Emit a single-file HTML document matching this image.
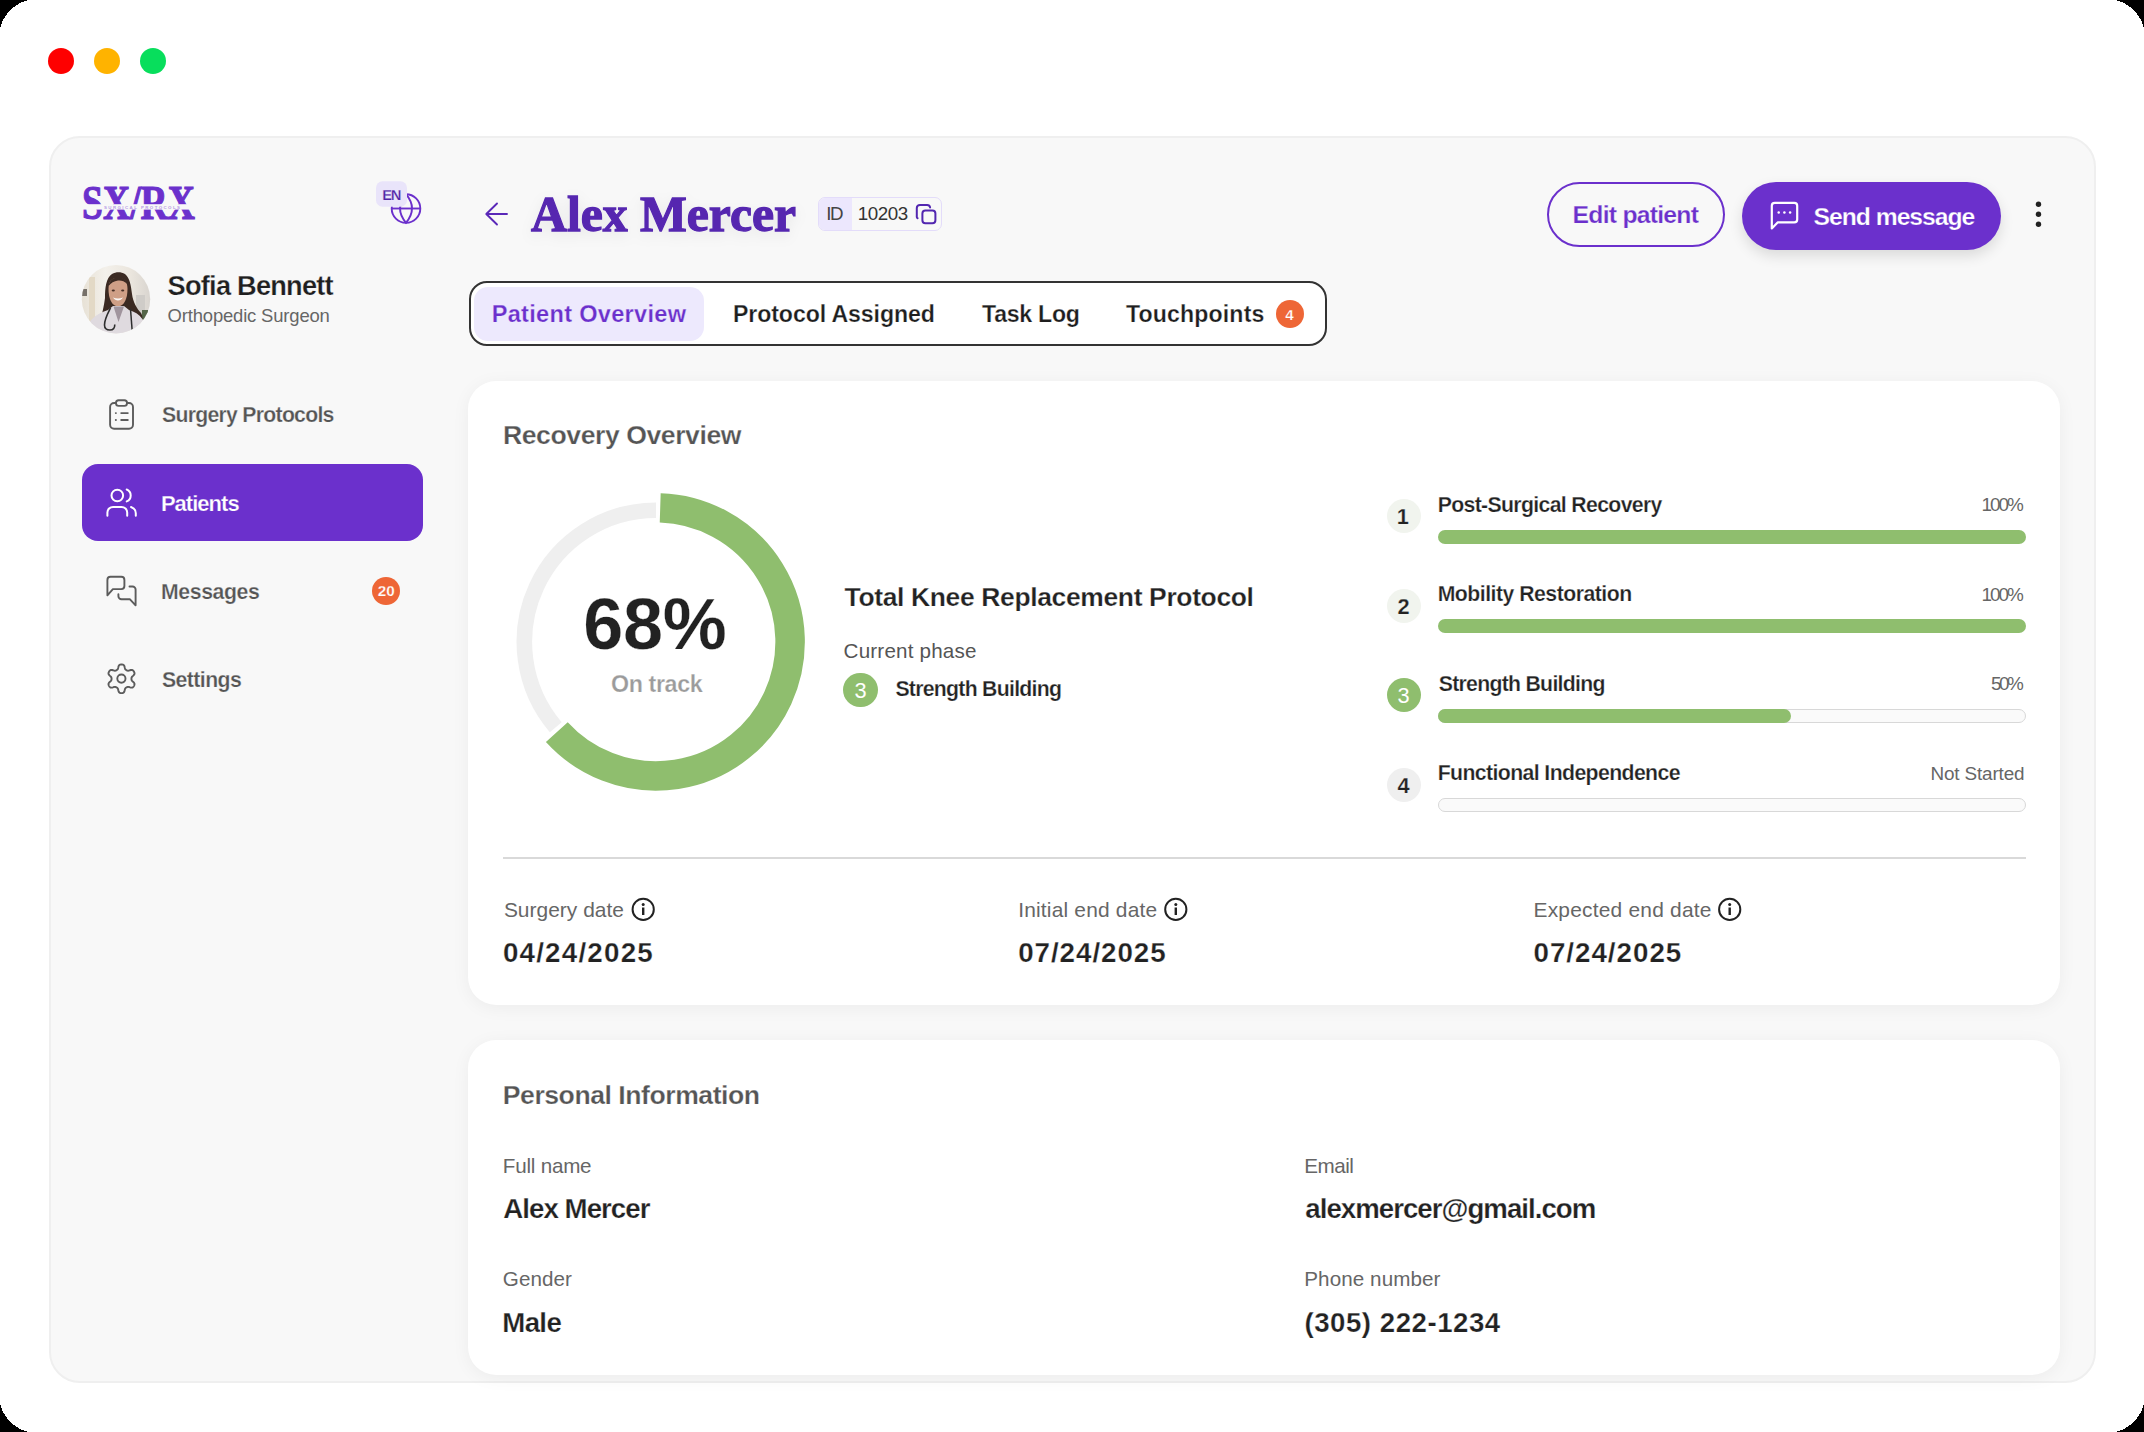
<!DOCTYPE html>
<html><head><meta charset="utf-8">
<style>
*{margin:0;padding:0;box-sizing:border-box}
html,body{width:2144px;height:1432px;overflow:hidden;background:#000}
body{font-family:"Liberation Sans",sans-serif;color:#222;position:relative}
.win{position:absolute;left:0;top:0;width:2144px;height:1432px;background:#fff;overflow:hidden}
.dot{position:absolute;width:26px;height:26px;border-radius:50%;top:48px}
.frame{position:absolute;left:48.5px;top:136.3px;width:2047.3px;height:1247px;background:#f8f8f8;border:2px solid #efefef;border-radius:31px;overflow:hidden}
.card{position:absolute;background:#fff;border-radius:28px;box-shadow:0 3px 18px rgba(0,0,0,0.05)}
.t{position:absolute;white-space:nowrap;line-height:1}
.abs{position:absolute}
.circ{position:absolute;border-radius:50%}
.bar{position:absolute;left:1438px;width:588px;height:14px;border-radius:7px;background:#8fbe6e}
.track{position:absolute;left:1438px;width:588px;height:14px;border-radius:7px;background:#fafafa;border:1.3px solid #d8d8d8}
.num{position:absolute;width:34px;height:34px;border-radius:50%;background:#f1f4ee;left:1386.5px}
svg{position:absolute;overflow:visible}
@media (max-width:1200px){html{zoom:0.5}}
</style></head>
<body>
<div class="win">
  <div class="dot" style="left:48px;background:#fe0000"></div>
  <div class="dot" style="left:94px;background:#ffb300"></div>
  <div class="dot" style="left:140px;background:#08de5c"></div>

  <div class="frame"></div>

  <!-- logo -->
  <svg style="left:0;top:0" width="2144" height="1432" viewBox="0 0 2144 1432">
    <g id="logo">
      <text x="82" y="219.3" font-family="Liberation Serif" font-weight="700" font-size="49.5" fill="#6b30cc" stroke="#6b30cc" stroke-width="1.2" textLength="113" lengthAdjust="spacingAndGlyphs">SX/RX</text>
      <rect x="80" y="204.2" width="120" height="5.4" fill="#f8f8f8"/>
      <text x="104" y="208.6" font-family="Liberation Sans" font-weight="700" font-size="4.4" fill="#b79be6" textLength="76" lengthAdjust="spacing">SURGICAL PROTOCOLS</text>
    </g>
    <!-- globe -->
    <g fill="none" stroke="#6b30cc" stroke-width="1.9">
      <circle cx="406" cy="208.5" r="14.3"/>
      <line x1="391.7" y1="208.5" x2="420.3" y2="208.5"/>
      <path d="M406 194.2 Q418 208.5 406 222.8 Q394 208.5 406 194.2Z"/>
    </g>
    <rect x="376" y="181.3" width="31" height="25.4" rx="6.5" fill="#e9e4fa"/>

    <!-- avatar -->
    <defs>
      <clipPath id="av"><circle cx="116" cy="299.2" r="34.2"/></clipPath>
      <linearGradient id="avbg" x1="0" y1="0" x2="1" y2="0">
        <stop offset="0" stop-color="#e6e0d4"/><stop offset="0.35" stop-color="#f3f0ea"/><stop offset="0.7" stop-color="#ebe6de"/><stop offset="1" stop-color="#d7d3ce"/>
      </linearGradient>
      <filter id="tsh" x="-20%" y="-60%" width="140%" height="220%"><feDropShadow dx="0" dy="4" stdDeviation="7" flood-color="#000" flood-opacity="0.07"/></filter>
      <filter id="soft" x="-10%" y="-10%" width="120%" height="120%"><feGaussianBlur stdDeviation="0.7"/></filter>
    </defs>
    <g clip-path="url(#av)">
      <rect x="80" y="264" width="72" height="72" fill="url(#avbg)"/>
      <g filter="url(#soft)">
      <rect x="89" y="277" width="6" height="46" fill="#e3d9c6"/>
      <rect x="82" y="289" width="5" height="7" fill="#77716a"/>
      <rect x="136" y="295" width="9" height="24" fill="#cfccc8"/>
      <rect x="142" y="310" width="6" height="10" fill="#55664a"/>
      <path d="M100 322 C102 314 104 306 105 298 C105 288 106 278 112 274 C116 271.5 121 271.5 125 274 C130 278 131 286 132 294 C133 302 137 309 141 313 C143 316 143 322 141 326 L128 326 L106 326 Z" fill="#3b2a22"/>
      <path d="M108.5 289 C108.5 281 112 278 118 278 C124 278 127.5 281 127.5 289 C127.5 299 124 306 118 306.5 C112 306 108.5 299 108.5 289 Z" fill="#cf9f86"/>
      <path d="M108.5 286 C109.5 280 113 277.5 118.5 277.5 C123 277.5 126 279.5 127.5 284 C124 281 121 280 118 280.5 C114 281 111 283 108.5 286 Z" fill="#3b2a22"/>
      <ellipse cx="113.3" cy="290.5" rx="1.6" ry="1" fill="#4a3028"/>
      <ellipse cx="122.7" cy="290.5" rx="1.6" ry="1" fill="#4a3028"/>
      <path d="M113 297.5 C115.5 301.5 120.5 301.5 123 297.5 C120 298.8 116 298.8 113 297.5Z" fill="#fbf7f5"/>
      <path d="M84 336 C86 322 95 314 108 310 L113 306 L124 306 L129 310 C140 313 147 322 149 336 Z" fill="#dfdadf"/>
      <path d="M113.5 306.5 L118.5 322 L124 306.5 Z" fill="#a0949d"/>
      <path d="M110.5 308 C108 313 104.5 319 104.5 325 C104.5 328.5 107 330 110 330 C113 330 114.8 328 114.8 324.5" stroke="#2e2e2e" stroke-width="1.6" fill="none"/>
      <path d="M130.5 309 L132.2 331" stroke="#2e2e2e" stroke-width="1.5" fill="none"/>
      </g>
    </g>

    <!-- nav icons -->
    <g fill="none" stroke="#5c5c5c" stroke-width="1.9" stroke-linecap="round" stroke-linejoin="round">
      <rect x="110.1" y="403" width="22.9" height="25.8" rx="4"/>
      <rect x="116" y="400.2" width="11" height="5.7" rx="2.6" fill="#f8f8f8"/>
      <line x1="115.8" y1="413.1" x2="115.9" y2="413.1"/><line x1="121.2" y1="413.1" x2="127.8" y2="413.1"/>
      <line x1="115.8" y1="420" x2="115.9" y2="420"/><line x1="121.2" y1="420" x2="127.8" y2="420"/>
    </g>
    <g fill="none" stroke="#5c5c5c" stroke-width="1.9" stroke-linecap="round" stroke-linejoin="round">
      <path d="M107.4 595.3 V580 C107.4 578.2 108.6 576.8 110.5 576.8 H121.3 C123 576.8 124.4 578.2 124.4 580 V586 C124.4 587.8 123 589.1 121.3 589.1 H112.9 Z"/>
      <path d="M129.5 586.5 H132.5 C134.2 586.5 135.6 587.9 135.6 589.6 V605.3 L130 599.3 H121.5 C119.8 599.3 118.4 597.9 118.4 596.2 V594.2"/>
    </g>
    <g fill="none" stroke="#5c5c5c" stroke-width="1.9" stroke-linejoin="round">
      <path d="M121.50 664.45 L121.88 664.46 L122.25 664.50 L122.62 664.57 L122.98 664.67 L123.34 664.83 L123.68 665.07 L123.98 665.40 L124.25 665.85 L124.47 666.42 L124.64 667.06 L124.78 667.71 L124.92 668.28 L125.06 668.74 L125.23 669.10 L125.41 669.36 L125.61 669.58 L125.82 669.75 L126.03 669.91 L126.25 670.05 L126.47 670.18 L126.70 670.31 L126.94 670.43 L127.18 670.54 L127.43 670.63 L127.72 670.70 L128.04 670.72 L128.43 670.69 L128.90 670.58 L129.46 670.41 L130.09 670.21 L130.74 670.03 L131.34 669.94 L131.87 669.95 L132.31 670.05 L132.68 670.22 L132.99 670.45 L133.27 670.71 L133.51 671.00 L133.73 671.31 L133.93 671.62 L134.10 671.96 L134.26 672.30 L134.39 672.65 L134.48 673.02 L134.51 673.41 L134.48 673.82 L134.35 674.25 L134.09 674.71 L133.71 675.18 L133.24 675.66 L132.75 676.10 L132.32 676.50 L131.99 676.86 L131.77 677.17 L131.63 677.47 L131.54 677.74 L131.49 678.01 L131.47 678.28 L131.45 678.54 L131.45 678.80 L131.45 679.06 L131.47 679.32 L131.49 679.59 L131.54 679.86 L131.63 680.13 L131.77 680.43 L131.99 680.74 L132.32 681.10 L132.75 681.50 L133.24 681.94 L133.71 682.42 L134.09 682.89 L134.35 683.35 L134.48 683.78 L134.51 684.19 L134.48 684.58 L134.39 684.95 L134.26 685.30 L134.10 685.64 L133.93 685.97 L133.73 686.29 L133.51 686.60 L133.27 686.89 L132.99 687.15 L132.68 687.38 L132.31 687.55 L131.87 687.65 L131.34 687.66 L130.74 687.57 L130.09 687.39 L129.46 687.19 L128.90 687.02 L128.43 686.91 L128.04 686.88 L127.72 686.90 L127.43 686.97 L127.18 687.06 L126.94 687.17 L126.70 687.29 L126.47 687.42 L126.25 687.55 L126.03 687.69 L125.82 687.85 L125.61 688.02 L125.41 688.24 L125.23 688.50 L125.06 688.86 L124.92 689.32 L124.78 689.89 L124.64 690.54 L124.47 691.18 L124.25 691.75 L123.98 692.20 L123.68 692.53 L123.34 692.77 L122.98 692.93 L122.62 693.03 L122.25 693.10 L121.88 693.14 L121.50 693.15 L121.12 693.14 L120.75 693.10 L120.38 693.03 L120.02 692.93 L119.66 692.77 L119.32 692.53 L119.02 692.20 L118.75 691.75 L118.53 691.18 L118.36 690.54 L118.22 689.89 L118.08 689.32 L117.94 688.86 L117.77 688.50 L117.59 688.24 L117.39 688.02 L117.18 687.85 L116.97 687.69 L116.75 687.55 L116.53 687.42 L116.30 687.29 L116.06 687.17 L115.82 687.06 L115.57 686.97 L115.28 686.90 L114.96 686.88 L114.57 686.91 L114.10 687.02 L113.54 687.19 L112.91 687.39 L112.26 687.57 L111.66 687.66 L111.13 687.65 L110.69 687.55 L110.32 687.38 L110.01 687.15 L109.73 686.89 L109.49 686.60 L109.27 686.29 L109.07 685.97 L108.90 685.64 L108.74 685.30 L108.61 684.95 L108.52 684.58 L108.49 684.19 L108.52 683.78 L108.65 683.35 L108.91 682.89 L109.29 682.42 L109.76 681.94 L110.25 681.50 L110.68 681.10 L111.01 680.74 L111.23 680.43 L111.37 680.13 L111.46 679.86 L111.51 679.59 L111.53 679.32 L111.55 679.06 L111.55 678.80 L111.55 678.54 L111.53 678.28 L111.51 678.01 L111.46 677.74 L111.37 677.47 L111.23 677.17 L111.01 676.86 L110.68 676.50 L110.25 676.10 L109.76 675.66 L109.29 675.18 L108.91 674.71 L108.65 674.25 L108.52 673.82 L108.49 673.41 L108.52 673.02 L108.61 672.65 L108.74 672.30 L108.90 671.96 L109.07 671.62 L109.27 671.31 L109.49 671.00 L109.73 670.71 L110.01 670.45 L110.32 670.22 L110.69 670.05 L111.13 669.95 L111.66 669.94 L112.26 670.03 L112.91 670.21 L113.54 670.41 L114.10 670.58 L114.57 670.69 L114.96 670.72 L115.28 670.70 L115.57 670.63 L115.82 670.54 L116.06 670.43 L116.30 670.31 L116.53 670.18 L116.75 670.05 L116.97 669.91 L117.18 669.75 L117.39 669.58 L117.59 669.36 L117.77 669.10 L117.94 668.74 L118.08 668.28 L118.22 667.71 L118.36 667.06 L118.53 666.42 L118.75 665.85 L119.02 665.40 L119.32 665.07 L119.66 664.83 L120.02 664.67 L120.38 664.57 L120.75 664.50 L121.12 664.46 L121.50 664.45Z"/>
      <circle cx="121.4" cy="678.6" r="4.1"/>
    </g>
  </svg>

  <!-- active nav -->
  <div class="abs" style="left:82px;top:464px;width:341px;height:77px;border-radius:16px;background:#6b30cc"></div>
  <svg style="left:0;top:0" width="2144" height="1432">
    <g fill="none" stroke="#fff" stroke-width="2" stroke-linecap="round">
      <circle cx="117.3" cy="495.5" r="5.8"/>
      <path d="M126.7 489.5 A6.43 6.43 0 0 1 126.7 501.4"/>
      <path d="M107.4 515.8 V512.5 C107.4 509.4 110 506.9 113.1 506.9 H121.5 C124.6 506.9 127.2 509.4 127.2 512.5 V515.8"/>
      <path d="M131 507 C133.8 508 135.8 510.5 135.8 513.2 V515.8"/>
    </g>
  </svg>
  <div class="circ" style="left:371.7px;top:576.7px;width:28.6px;height:28.6px;background:#ee6636"></div>

  <!-- header -->
  <svg style="left:0;top:0" width="2144" height="1432">
    <g fill="none" stroke="#5a28b8" stroke-width="1.9" stroke-linecap="round" stroke-linejoin="round">
      <path d="M507 214 L486.5 214 M497 203.5 L486.3 214 L497 224.5"/>
    </g>
  </svg>
  <div class="abs" style="left:818px;top:196.8px;width:124.3px;height:34px;border-radius:7px;border:1.5px solid #e3dcfa;background:#f8f8f8"></div>
  <div class="abs" style="left:819px;top:197.8px;width:33px;height:32px;border-radius:6px 0 0 6px;background:#ece7fd"></div>
  <svg style="left:0;top:0" width="2144" height="1432">
    <g fill="none" stroke="#5226b0" stroke-width="2" stroke-linejoin="round" stroke-linecap="round">
      <rect x="922.4" y="210.6" width="13" height="12.7" rx="3"/>
      <path d="M917.6 218.2 C917 218 916.8 217.6 916.8 217 V208 C916.8 206.3 918.2 204.9 919.9 204.9 H927.2 C928.7 204.9 929.9 206 930.1 207.4"/>
    </g>
  </svg>

  <div class="abs" style="left:1547px;top:181.6px;width:177.8px;height:65px;border-radius:33px;border:2px solid #6b30cc"></div>
  <div class="abs" style="left:1741.8px;top:181.6px;width:259px;height:68.2px;border-radius:34px;background:#6b30cc;box-shadow:0 6px 14px rgba(0,0,0,0.12)"></div>
  <svg style="left:0;top:0" width="2144" height="1432">
    <g fill="none" stroke="#fff" stroke-width="2.2" stroke-linejoin="round">
      <path d="M1771.8 228.4 V205.8 C1771.8 204.2 1773.1 202.9 1774.7 202.9 H1794.3 C1795.9 202.9 1797.2 204.2 1797.2 205.8 V219.5 C1797.2 221.1 1795.9 222.4 1794.3 222.4 H1777.6 Z"/>
    </g>
    <g fill="#fff"><circle cx="1778.7" cy="212.6" r="1.25"/><circle cx="1784.4" cy="212.6" r="1.25"/><circle cx="1790.1" cy="212.6" r="1.25"/></g>
    <g fill="#222"><circle cx="2038.5" cy="204.2" r="2.7"/><circle cx="2038.5" cy="214.2" r="2.7"/><circle cx="2038.5" cy="224.2" r="2.7"/></g>
  </svg>

  <!-- tabs -->
  <div class="abs" style="left:469px;top:281.3px;width:857.5px;height:64.7px;border-radius:18px;border:2px solid #333;background:#fff"></div>
  <div class="abs" style="left:474px;top:286.6px;width:229.7px;height:54px;border-radius:14px;background:#ede9fd"></div>
  <div class="circ" style="left:1275.8px;top:299.7px;width:28px;height:28px;background:#ee6636"></div>

  <!-- card 1 -->
  <div class="card" style="left:468.4px;top:380.5px;width:1591.8px;height:624.8px"></div>
  <svg style="left:0;top:0" width="2144" height="1432">
    <g fill="none">
      <path id="trk" d="M555.74 727.22 A131.65 131.65 0 0 1 656.00 510.25" stroke="#efefef" stroke-width="15.6"/>
      <path id="grn" d="M660.21 507.87 A134.1 134.1 0 1 1 556.82 732.15" stroke="#8fbe6e" stroke-width="29.5"/>
    </g>
  </svg>
  <div class="circ" style="left:843.3px;top:673px;width:34.4px;height:34.4px;background:#8fbe6e"></div>

  <div class="num" style="top:499px"></div>
  <div class="num" style="top:588.8px"></div>
  <div class="num" style="top:678.2px;background:#8fbe6e"></div>
  <div class="num" style="top:768px;background:#efefef"></div>
  <div class="bar" style="top:530px"></div>
  <div class="bar" style="top:619.3px"></div>
  <div class="track" style="top:708.8px"></div>
  <div class="bar" style="top:708.8px;width:353px"></div>
  <div class="track" style="top:798.2px"></div>

  <div class="abs" style="left:503px;top:857px;width:1523px;height:2px;background:#d9d9d9"></div>
  <svg style="left:0;top:0" width="2144" height="1432">
    <g fill="none" stroke="#222" stroke-width="2">
      <circle cx="643.2" cy="909.4" r="10.6"/>
      <circle cx="1175.8" cy="909.4" r="10.6"/>
      <circle cx="1729.7" cy="909.4" r="10.6"/>
    </g>
    <g fill="#222">
      <circle cx="643.2" cy="904.6" r="1.5"/><rect x="642" y="907.5" width="2.4" height="7.5"/>
      <circle cx="1175.8" cy="904.6" r="1.5"/><rect x="1174.6" y="907.5" width="2.4" height="7.5"/>
      <circle cx="1729.7" cy="904.6" r="1.5"/><rect x="1728.5" y="907.5" width="2.4" height="7.5"/>
    </g>
  </svg>

  <!-- card 2 -->
  <div class="card" style="left:468px;top:1039.8px;width:1592px;height:335.2px"></div>

<svg style="left:0;top:0" width="2144" height="1432" font-family="Liberation Sans">
<text x="377.76" y="596.25" font-size="15.26" font-weight="700" fill="#fff" stroke="#ee6636" stroke-width="0.25">20</text>
<text x="1285.30" y="319.75" font-size="15.26" font-weight="700" fill="#fff" stroke="#ee6636" stroke-width="0.25">4</text>
<text x="854.50" y="698.10" font-size="21.80" font-weight="400" fill="#fff">3</text>
<text x="1396.70" y="524.00" font-size="21.80" font-weight="700" fill="#222" stroke="#f1f4ee" stroke-width="0.25">1</text>
<text x="1397.50" y="613.70" font-size="21.80" font-weight="700" fill="#222" stroke="#f1f4ee" stroke-width="0.25">2</text>
<text x="1397.50" y="703.30" font-size="21.80" font-weight="400" fill="#fff">3</text>
<text x="1397.50" y="793.00" font-size="21.80" font-weight="700" fill="#222" stroke="#efefef" stroke-width="0.25">4</text>
<text x="167.60" y="295.30" font-size="27.18" font-weight="700" fill="#1f1f1f" letter-spacing="-0.756" stroke="#f8f8f8" stroke-width="0.25">Sofia Bennett</text>
<text x="167.60" y="322.00" font-size="18.46" font-weight="400" fill="#666" letter-spacing="-0.163">Orthopedic Surgeon</text>
<text x="162.10" y="422.00" font-size="21.22" font-weight="700" fill="#555" letter-spacing="-0.728" stroke="#f8f8f8" stroke-width="0.25">Surgery Protocols</text>
<text x="160.90" y="511.00" font-size="21.95" font-weight="700" fill="#fff" letter-spacing="-0.948" stroke="#6b30cc" stroke-width="0.25">Patients</text>
<text x="161.00" y="599.00" font-size="21.22" font-weight="700" fill="#555" letter-spacing="-0.377" stroke="#f8f8f8" stroke-width="0.25">Messages</text>
<text x="162.00" y="687.00" font-size="21.22" font-weight="700" fill="#555" letter-spacing="-0.558" stroke="#f8f8f8" stroke-width="0.25">Settings</text>
<text x="382.30" y="199.80" font-size="14.83" font-weight="700" fill="#4f22a5" letter-spacing="-1.480" stroke="#e9e4fa" stroke-width="0.25">EN</text>
<text filter="url(#tsh)" transform="translate(531.10 231.10) scale(0.9613 1)" x="0" y="0" font-family="Liberation Serif" font-size="51.62" font-weight="700" fill="#5626b0" stroke="#5626b0" stroke-width="1.3">Alex Mercer</text>
<text x="826.30" y="220.20" font-size="18.75" font-weight="400" fill="#444" letter-spacing="-1.509">ID</text>
<text x="857.80" y="220.20" font-size="18.75" font-weight="400" fill="#333" letter-spacing="-0.428">10203</text>
<text x="1572.60" y="223.00" font-size="24.71" font-weight="700" fill="#6b30cc" letter-spacing="-0.744" stroke="#f8f8f8" stroke-width="0.25">Edit patient</text>
<text x="1813.50" y="224.90" font-size="24.71" font-weight="700" fill="#fff" letter-spacing="-1.015" stroke="#6b30cc" stroke-width="0.25">Send message</text>
<text x="491.70" y="322.20" font-size="23.55" font-weight="700" fill="#6b30cc" letter-spacing="0.304" stroke="#ede9fd" stroke-width="0.25">Patient Overview</text>
<text x="733.00" y="322.10" font-size="23.11" font-weight="700" fill="#1e1e1e" letter-spacing="-0.090" stroke="#ffffff" stroke-width="0.25">Protocol Assigned</text>
<text x="982.00" y="322.10" font-size="23.11" font-weight="700" fill="#1e1e1e" letter-spacing="-0.259" stroke="#ffffff" stroke-width="0.25">Task Log</text>
<text x="1125.90" y="322.10" font-size="23.11" font-weight="700" fill="#1e1e1e" letter-spacing="0.153" stroke="#ffffff" stroke-width="0.25">Touchpoints</text>
<text x="503.00" y="444.30" font-size="26.60" font-weight="700" fill="#555" letter-spacing="-0.437" stroke="#ffffff" stroke-width="0.25">Recovery Overview</text>
<text x="583.20" y="649.00" font-size="71.95" font-weight="700" fill="#222" letter-spacing="-0.208" stroke="#ffffff" stroke-width="0.25">68%</text>
<text x="611.00" y="691.80" font-size="23.26" font-weight="700" fill="#9b9b9b" letter-spacing="-0.385" stroke="#ffffff" stroke-width="0.25">On track</text>
<text x="844.60" y="606.30" font-size="26.45" font-weight="700" fill="#222" letter-spacing="-0.344" stroke="#ffffff" stroke-width="0.25">Total Knee Replacement Protocol</text>
<text x="843.60" y="658.00" font-size="20.64" font-weight="400" fill="#555" letter-spacing="0.173">Current phase</text>
<text x="895.40" y="695.90" font-size="21.22" font-weight="700" fill="#222" letter-spacing="-0.713" stroke="#ffffff" stroke-width="0.25">Strength Building</text>
<text x="1437.70" y="511.60" font-size="21.22" font-weight="700" fill="#222" letter-spacing="-0.643" stroke="#ffffff" stroke-width="0.25">Post-Surgical Recovery</text>
<text x="1437.70" y="601.20" font-size="21.22" font-weight="700" fill="#222" letter-spacing="-0.499" stroke="#ffffff" stroke-width="0.25">Mobility Restoration</text>
<text x="1438.70" y="690.80" font-size="21.22" font-weight="700" fill="#222" letter-spacing="-0.701" stroke="#ffffff" stroke-width="0.25">Strength Building</text>
<text x="1437.70" y="780.40" font-size="21.22" font-weight="700" fill="#222" letter-spacing="-0.592" stroke="#ffffff" stroke-width="0.25">Functional Independence</text>
<text x="1981.50" y="511.20" font-size="18.90" font-weight="400" fill="#666" letter-spacing="-1.997">100%</text>
<text x="1981.50" y="600.80" font-size="18.90" font-weight="400" fill="#666" letter-spacing="-1.997">100%</text>
<text x="1991.00" y="690.40" font-size="18.90" font-weight="400" fill="#666" letter-spacing="-2.497">50%</text>
<text x="1930.40" y="780.00" font-size="18.90" font-weight="400" fill="#666" letter-spacing="-0.137">Not Started</text>
<text x="503.90" y="917.00" font-size="20.93" font-weight="400" fill="#666" letter-spacing="0.022">Surgery date</text>
<text x="502.90" y="961.80" font-size="27.76" font-weight="700" fill="#222" letter-spacing="1.216" stroke="#ffffff" stroke-width="0.25">04/24/2025</text>
<text x="1018.20" y="917.00" font-size="20.93" font-weight="400" fill="#666" letter-spacing="0.189">Initial end date</text>
<text x="1018.20" y="961.80" font-size="27.76" font-weight="700" fill="#222" letter-spacing="0.950" stroke="#ffffff" stroke-width="0.25">07/24/2025</text>
<text x="1533.50" y="917.00" font-size="20.93" font-weight="400" fill="#666" letter-spacing="0.216">Expected end date</text>
<text x="1533.50" y="961.80" font-size="27.76" font-weight="700" fill="#222" letter-spacing="0.983" stroke="#ffffff" stroke-width="0.25">07/24/2025</text>
<text x="502.80" y="1104.00" font-size="26.60" font-weight="700" fill="#555" letter-spacing="-0.462" stroke="#ffffff" stroke-width="0.25">Personal Information</text>
<text x="502.80" y="1172.60" font-size="20.64" font-weight="400" fill="#666" letter-spacing="-0.223">Full name</text>
<text x="503.30" y="1218.00" font-size="27.62" font-weight="700" fill="#222" letter-spacing="-0.940" stroke="#ffffff" stroke-width="0.25">Alex Mercer</text>
<text x="502.80" y="1286.40" font-size="20.64" font-weight="400" fill="#666" letter-spacing="0.055">Gender</text>
<text x="502.30" y="1331.80" font-size="27.62" font-weight="700" fill="#222" letter-spacing="-0.642" stroke="#ffffff" stroke-width="0.25">Male</text>
<text x="1304.30" y="1172.60" font-size="20.64" font-weight="400" fill="#666" letter-spacing="-0.523">Email</text>
<text x="1305.30" y="1218.00" font-size="27.62" font-weight="700" fill="#222" letter-spacing="-0.966" stroke="#ffffff" stroke-width="0.25">alexmercer@gmail.com</text>
<text x="1304.30" y="1286.40" font-size="20.64" font-weight="400" fill="#666" letter-spacing="0.070">Phone number</text>
<text x="1304.50" y="1331.80" font-size="27.62" font-weight="700" fill="#222" letter-spacing="0.527" stroke="#ffffff" stroke-width="0.25">(305) 222-1234</text>
</svg>
<svg style="left:0;top:0" width="2144" height="1432"><path d="M0.00 0.00 L31.00 0.00 L30.55 0.01 L30.00 0.05 L29.39 0.11 L28.76 0.20 L28.10 0.31 L27.41 0.44 L26.72 0.60 L26.01 0.79 L25.29 0.99 L24.56 1.22 L23.83 1.48 L23.09 1.76 L22.34 2.06 L21.60 2.38 L20.85 2.73 L20.11 3.09 L19.37 3.48 L18.62 3.89 L17.89 4.32 L17.15 4.77 L16.43 5.25 L15.71 5.74 L14.99 6.24 L14.29 6.77 L13.59 7.32 L12.91 7.88 L12.23 8.46 L11.57 9.05 L10.92 9.66 L10.28 10.28 L9.66 10.92 L9.05 11.57 L8.46 12.23 L7.88 12.91 L7.32 13.59 L6.77 14.29 L6.24 14.99 L5.74 15.71 L5.25 16.43 L4.77 17.15 L4.32 17.89 L3.89 18.62 L3.48 19.37 L3.09 20.11 L2.73 20.85 L2.38 21.60 L2.06 22.34 L1.76 23.09 L1.48 23.83 L1.22 24.56 L0.99 25.29 L0.79 26.01 L0.60 26.72 L0.44 27.41 L0.31 28.10 L0.20 28.76 L0.11 29.39 L0.05 30.00 L0.01 30.55 L0.00 31.00Z M2144.00 0.00 L2113.00 0.00 L2113.45 0.01 L2114.00 0.05 L2114.61 0.11 L2115.24 0.20 L2115.90 0.31 L2116.59 0.44 L2117.28 0.60 L2117.99 0.79 L2118.71 0.99 L2119.44 1.22 L2120.17 1.48 L2120.91 1.76 L2121.66 2.06 L2122.40 2.38 L2123.15 2.73 L2123.89 3.09 L2124.63 3.48 L2125.38 3.89 L2126.11 4.32 L2126.85 4.77 L2127.57 5.25 L2128.29 5.74 L2129.01 6.24 L2129.71 6.77 L2130.41 7.32 L2131.09 7.88 L2131.77 8.46 L2132.43 9.05 L2133.08 9.66 L2133.72 10.28 L2134.34 10.92 L2134.95 11.57 L2135.54 12.23 L2136.12 12.91 L2136.68 13.59 L2137.23 14.29 L2137.76 14.99 L2138.26 15.71 L2138.75 16.43 L2139.23 17.15 L2139.68 17.89 L2140.11 18.62 L2140.52 19.37 L2140.91 20.11 L2141.27 20.85 L2141.62 21.60 L2141.94 22.34 L2142.24 23.09 L2142.52 23.83 L2142.78 24.56 L2143.01 25.29 L2143.21 26.01 L2143.40 26.72 L2143.56 27.41 L2143.69 28.10 L2143.80 28.76 L2143.89 29.39 L2143.95 30.00 L2143.99 30.55 L2144.00 31.00Z M0.00 1432.00 L31.00 1432.00 L30.55 1431.99 L30.00 1431.95 L29.39 1431.89 L28.76 1431.80 L28.10 1431.69 L27.41 1431.56 L26.72 1431.40 L26.01 1431.21 L25.29 1431.01 L24.56 1430.78 L23.83 1430.52 L23.09 1430.24 L22.34 1429.94 L21.60 1429.62 L20.85 1429.27 L20.11 1428.91 L19.37 1428.52 L18.62 1428.11 L17.89 1427.68 L17.15 1427.23 L16.43 1426.75 L15.71 1426.26 L14.99 1425.76 L14.29 1425.23 L13.59 1424.68 L12.91 1424.12 L12.23 1423.54 L11.57 1422.95 L10.92 1422.34 L10.28 1421.72 L9.66 1421.08 L9.05 1420.43 L8.46 1419.77 L7.88 1419.09 L7.32 1418.41 L6.77 1417.71 L6.24 1417.01 L5.74 1416.29 L5.25 1415.57 L4.77 1414.85 L4.32 1414.11 L3.89 1413.38 L3.48 1412.63 L3.09 1411.89 L2.73 1411.15 L2.38 1410.40 L2.06 1409.66 L1.76 1408.91 L1.48 1408.17 L1.22 1407.44 L0.99 1406.71 L0.79 1405.99 L0.60 1405.28 L0.44 1404.59 L0.31 1403.90 L0.20 1403.24 L0.11 1402.61 L0.05 1402.00 L0.01 1401.45 L0.00 1401.00Z M2144.00 1432.00 L2113.00 1432.00 L2113.45 1431.99 L2114.00 1431.95 L2114.61 1431.89 L2115.24 1431.80 L2115.90 1431.69 L2116.59 1431.56 L2117.28 1431.40 L2117.99 1431.21 L2118.71 1431.01 L2119.44 1430.78 L2120.17 1430.52 L2120.91 1430.24 L2121.66 1429.94 L2122.40 1429.62 L2123.15 1429.27 L2123.89 1428.91 L2124.63 1428.52 L2125.38 1428.11 L2126.11 1427.68 L2126.85 1427.23 L2127.57 1426.75 L2128.29 1426.26 L2129.01 1425.76 L2129.71 1425.23 L2130.41 1424.68 L2131.09 1424.12 L2131.77 1423.54 L2132.43 1422.95 L2133.08 1422.34 L2133.72 1421.72 L2134.34 1421.08 L2134.95 1420.43 L2135.54 1419.77 L2136.12 1419.09 L2136.68 1418.41 L2137.23 1417.71 L2137.76 1417.01 L2138.26 1416.29 L2138.75 1415.57 L2139.23 1414.85 L2139.68 1414.11 L2140.11 1413.38 L2140.52 1412.63 L2140.91 1411.89 L2141.27 1411.15 L2141.62 1410.40 L2141.94 1409.66 L2142.24 1408.91 L2142.52 1408.17 L2142.78 1407.44 L2143.01 1406.71 L2143.21 1405.99 L2143.40 1405.28 L2143.56 1404.59 L2143.69 1403.90 L2143.80 1403.24 L2143.89 1402.61 L2143.95 1402.00 L2143.99 1401.45 L2144.00 1401.00Z" fill="#000" shape-rendering="crispEdges"/></svg>
</div>
</body></html>
